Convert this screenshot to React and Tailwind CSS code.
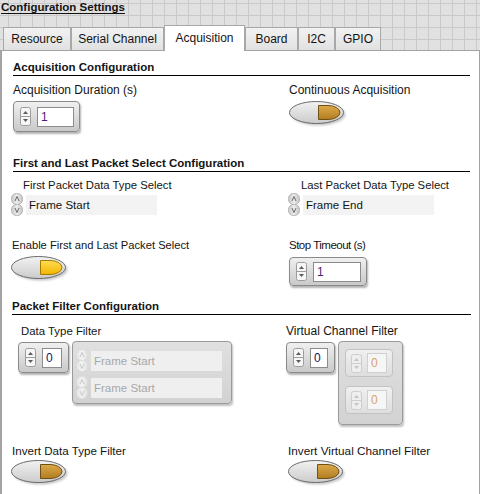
import { useId } from 'react'

const LABEL = 'leading-[15px] whitespace-nowrap'

const TABS = [
  { name: 'Resource', cls: 'w-[68px]' },
  { name: 'Serial Channel', cls: 'w-[93px]' },
  { name: 'Acquisition', cls: 'w-[81px]', active: true },
  { name: 'Board', cls: 'w-[53px]' },
  { name: 'I2C', cls: 'w-[37px]' },
  { name: 'GPIO', cls: 'w-[46px]' },
]

function Toggle({ on }) {
  const id = useId().replace(/:/g, '')
  const top = on ? '#ffdd55' : '#dcaa48'
  const bottom = on ? '#f2b400' : '#b27c22'
  const edge = on ? '#a07c00' : '#6e5016'
  return (
    <svg width="58" height="27" viewBox="0 0 58 27">
      <defs>
        <linearGradient id={`b${id}`} x1="0" y1="0" x2="0" y2="1">
          <stop offset="0" stopColor="#f2f2f2" />
          <stop offset="1" stopColor="#cbcbcb" />
        </linearGradient>
        <linearGradient id={`d${id}`} x1="0" y1="0" x2="0" y2="1">
          <stop offset="0" stopColor={top} />
          <stop offset="1" stopColor={bottom} />
        </linearGradient>
        <filter id={`s${id}`} x="-20%" y="-30%" width="140%" height="160%">
          <feGaussianBlur stdDeviation="1" />
        </filter>
      </defs>
      <ellipse cx="29.5" cy="13.5" rx="27" ry="11" fill="#000" opacity="0.22" filter={`url(#s${id})`} />
      <ellipse cx="27.5" cy="11.5" rx="27" ry="11" fill={`url(#b${id})`} stroke="#6a6a6a" />
      <path d="M29.5 4.5 H39 A12 7 0 0 1 39 18.5 H29.5 Z" fill={`url(#d${id})`} stroke={edge} />
    </svg>
  )
}

function Spinner({ disabled }) {
  const tri = disabled ? '#c4c4c4' : '#5a5a5a'
  const stroke = disabled ? '#cdcdcd' : '#9c9c9c'
  return (
    <svg width="11" height="19" viewBox="0 0 11 19">
      <rect x="0.5" y="0.5" width="10" height="18" rx="2" fill={disabled ? '#eeeeee' : '#f6f6f6'} stroke={stroke} />
      <line x1="1" y1="9.5" x2="10" y2="9.5" stroke={stroke} />
      <polygon points="3,7 8,7 5.5,4" fill={tri} />
      <polygon points="3,12 8,12 5.5,15" fill={tri} />
    </svg>
  )
}

function RingArrows({ disabled }) {
  const id = useId().replace(/:/g, '')
  const chev = disabled ? '#c8c8c8' : '#6a6a6a'
  return (
    <svg width="12" height="23" viewBox="0 0 12 23">
      <defs>
        <linearGradient id={`r${id}`} x1="0" y1="0" x2="1" y2="0">
          <stop offset="0" stopColor={disabled ? '#e6e6e6' : '#c9c9c9'} />
          <stop offset="0.5" stopColor={disabled ? '#f2f2f2' : '#ececec'} />
          <stop offset="1" stopColor={disabled ? '#e2e2e2' : '#c4c4c4'} />
        </linearGradient>
      </defs>
      <rect x="0.5" y="0.5" width="11" height="11" rx="5" fill={`url(#r${id})`} stroke={disabled ? '#dadada' : '#b4b4b4'} />
      <rect x="0.5" y="11.5" width="11" height="11" rx="5" fill={`url(#r${id})`} stroke={disabled ? '#dadada' : '#b4b4b4'} />
      <path d="M4 8 L6 3.5 L8 8" fill="none" stroke={chev} />
      <path d="M4 15 L6 19.5 L8 15" fill="none" stroke={chev} />
    </svg>
  )
}

function Numeric({ value, size, box, color, disabled }) {
  const frame = disabled
    ? 'border-[#c2c2c2] from-[#f0f0f0] to-[#dedede]'
    : 'border-[#8a8a8a] from-[#f0f0f0] to-[#c9c9c9] shadow-[1px_2px_2px_rgba(0,0,0,0.3)]'
  return (
    <div className={`flex items-center rounded-[4px] border bg-linear-to-b ${frame} ${size}`}>
      <Spinner disabled={disabled} />
      <div
        className={`h-[20px] border text-[12px] leading-[18px] pl-[3px] ${box} ${
          disabled ? 'border-[#d0d0d0] bg-[#f6f6f6] text-[#d4a36a]' : 'border-[#8c8c8c] bg-white'
        } ${color}`}
      >
        {value}
      </div>
    </div>
  )
}

function Ring({ value, disabled }) {
  return (
    <div className="flex items-center gap-[3px]">
      <RingArrows disabled={disabled} />
      <div
        className={`h-[20px] w-[131px] pl-[3px] text-[11.5px] leading-[20px] ${
          disabled ? 'bg-[#efefef] text-[#a8a8a8]' : 'bg-[#f3f3f3]'
        }`}
      >
        {value}
      </div>
    </div>
  )
}

function SectionHeader({ children, className }) {
  return (
    <div className={`border-b border-black text-[11.5px] font-bold leading-[15px] ${className}`}>
      {children}
    </div>
  )
}

export default function App() {
  return (
    <div className="h-[494px] w-[480px] overflow-hidden bg-[#e1e1e1] bg-[linear-gradient(to_right,#c9c9c9_1px,transparent_1px),linear-gradient(to_bottom,#c9c9c9_1px,transparent_1px)] bg-[length:12px_12px] bg-[position:8px_3px] font-['Liberation_Sans',Arial,sans-serif] text-[#141414]">
      {/* Title */}
      <div className="h-[25px] pl-[1px] text-[11.5px] font-bold leading-[14px] underline underline-offset-[2px]">
        Configuration Settings
      </div>

      {/* Tabs */}
      <div className="flex h-[25px] items-end pl-[3px]">
        {TABS.map(t => (
          <div
            key={t.name}
            className={`flex items-center justify-center border border-b-0 border-[#a8a8a8] text-[12px] ${t.cls} ${
              t.active
                ? 'relative z-10 -mb-px h-[26px] bg-white pb-[2px]'
                : 'h-[23px] bg-linear-to-b from-[#f2f2f2] to-[#e1e1e1]'
            }`}
          >
            {t.name}
          </div>
        ))}
      </div>

      {/* Panel */}
      <div className="h-[444px] border-t border-r border-l-2 border-[#a3a3a3] bg-white pl-[9px] pt-[9px]">
        <SectionHeader className="ml-[2px] w-[457px]">Acquisition Configuration</SectionHeader>

        <div className="mt-[7px] grid grid-cols-[275px_1fr]">
          <div className="ml-[2px]">
            <div className={`${LABEL} text-[12px]`}>Acquisition Duration (s)</div>
            <div className="mt-[3px]">
              <Numeric value="1" size="w-[67px] h-[31px] pl-[6px] gap-[6px]" box="w-[37px]" color="text-[#4b1f6f]" />
            </div>
          </div>
          <div className="ml-[3px]">
            <div className={`${LABEL} text-[12px]`}>Continuous Acquisition</div>
            <div className="mt-[3px]">
              <Toggle />
            </div>
          </div>
        </div>

        <SectionHeader className="ml-[2px] mt-[24px] w-[457px]">First and Last Packet Select Configuration</SectionHeader>

        <div className="mt-[6px] grid grid-cols-[275px_1fr]">
          <div>
            <div className={`${LABEL} ml-[12px] text-[11.3px]`}>First Packet Data Type Select</div>
            <Ring value="Frame Start" />
          </div>
          <div className="ml-[2px]">
            <div className={`${LABEL} ml-[13px] text-[11.3px]`}>Last Packet Data Type Select</div>
            <Ring value="Frame End" />
          </div>
        </div>

        <div className="mt-[22px] grid grid-cols-[275px_1fr]">
          <div>
            <div className={`${LABEL} ml-[1px] text-[11.2px]`}>Enable First and Last Packet Select</div>
            <div className="mt-[3px]">
              <Toggle on />
            </div>
          </div>
          <div className="ml-[3px]">
            <div className={`${LABEL} text-[11.5px] tracking-[-0.5px]`}>Stop Timeout (s)</div>
            <div className="mt-[4px]">
              <Numeric value="1" size="w-[78px] h-[29px] pl-[6px] gap-[6px]" box="w-[48px]" color="text-[#4b1f6f]" />
            </div>
          </div>
        </div>

        <SectionHeader className="mt-[13px] ml-[1px] w-[459px]">Packet Filter Configuration</SectionHeader>

        <div className="mt-[9px] grid grid-cols-[275px_1fr]">
          <div>
            <div className={`${LABEL} ml-[10px] text-[11.4px]`}>Data Type Filter</div>
            <div className="mt-[2px] flex items-start">
              <div className="ml-[7px] mt-px">
                <Numeric value="0" size="w-[51px] h-[31px] pl-[6px] gap-[6px]" box="w-[20px]" color="text-[#10206a]" />
              </div>
              <div className="ml-[3px] h-[63px] w-[160px] rounded-[4px] border border-[#9a9a9a] bg-linear-to-b from-[#e0e0e0] to-[#d2d2d2] pl-[3px] pt-[7px] shadow-[1px_2px_2px_rgba(0,0,0,0.25)]">
                <Ring value="Frame Start" disabled />
                <div className="mt-[4px]">
                  <Ring value="Frame Start" disabled />
                </div>
              </div>
            </div>
          </div>
          <div>
            <div className={`${LABEL} text-[12px]`}>Virtual Channel Filter</div>
            <div className="mt-[2px] flex items-start">
              <div className="mt-px">
                <Numeric value="0" size="w-[49px] h-[31px] pl-[6px] gap-[6px]" box="w-[18px]" color="text-[#10206a]" />
              </div>
              <div className="ml-[3px] h-[84px] w-[65px] rounded-[4px] border border-[#9a9a9a] bg-linear-to-b from-[#e0e0e0] to-[#d2d2d2] pl-[6px] pt-[7px] shadow-[1px_2px_2px_rgba(0,0,0,0.25)]">
                <Numeric value="0" size="w-[48px] h-[28px] pl-[5px] gap-[5px]" box="w-[20px]" disabled />
                <div className="mt-[9px]">
                  <Numeric value="0" size="w-[48px] h-[28px] pl-[5px] gap-[5px]" box="w-[20px]" disabled />
                </div>
              </div>
            </div>
          </div>
        </div>

        <div className="mt-[18px] grid grid-cols-[275px_1fr]">
          <div>
            <div className={`${LABEL} ml-[1px] text-[11.6px]`}>Invert Data Type Filter</div>
            <div className="mt-[2px]">
              <Toggle />
            </div>
          </div>
          <div className="ml-[2px]">
            <div className={`${LABEL} text-[11.75px]`}>Invert Virtual Channel Filter</div>
            <div className="mt-[2px]">
              <Toggle />
            </div>
          </div>
        </div>
      </div>
    </div>
  )
}
